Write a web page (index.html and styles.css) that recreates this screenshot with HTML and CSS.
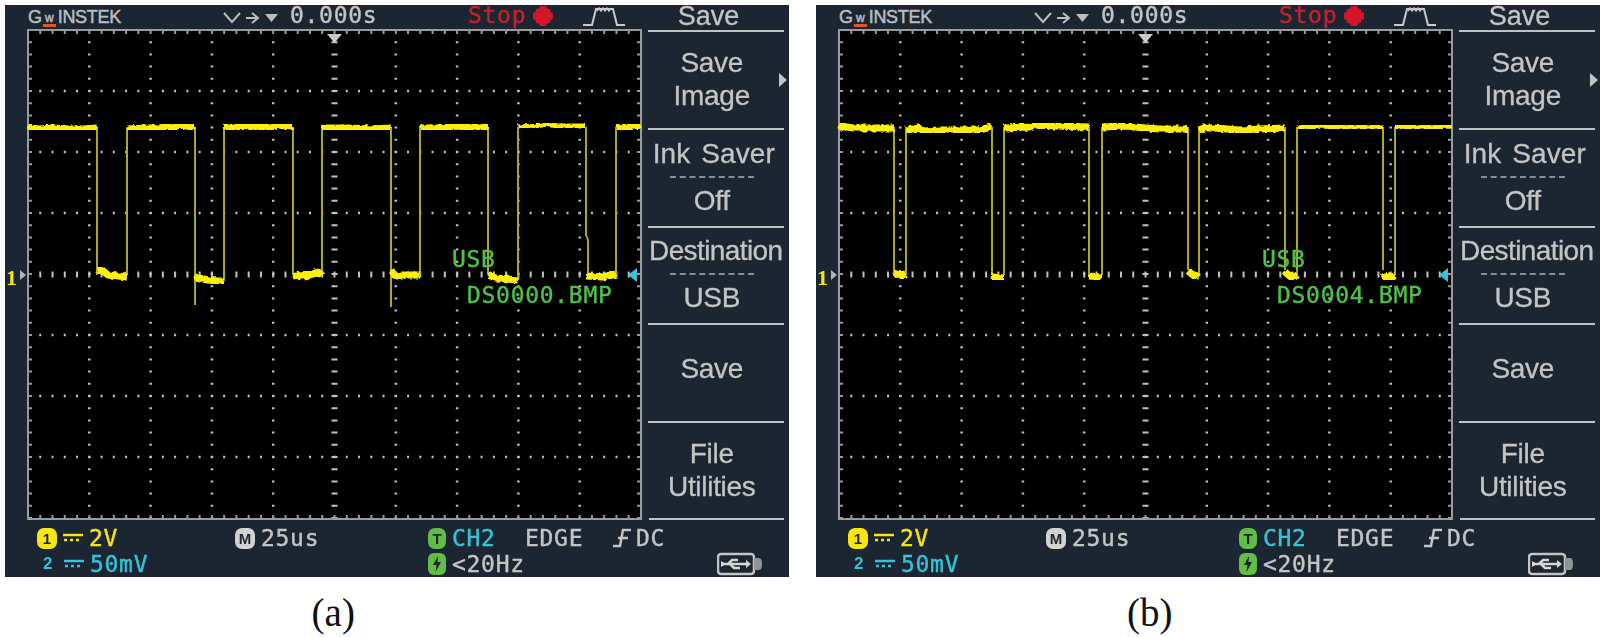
FILE: index.html
```html
<!DOCTYPE html>
<html lang="en">
<head>
  <meta charset="UTF-8" />
  <title>Oscilloscope captures</title>
  <link rel="stylesheet" href="styles.css">
</head>
<body>

  <!-- shared drawings -->
  <svg class="defs" width="0" height="0">
    <defs>
      <filter id="rough" x="-2%" y="-20%" width="104%" height="140%">
        <feTurbulence type="fractalNoise" baseFrequency="0.22" numOctaves="2" seed="4" />
        <feDisplacementMap in="SourceGraphic" scale="5" />
      </filter>
      <symbol id="grid" viewBox="0 0 613 489" overflow="visible">
        <!-- dots on the major lines -->
        <path class="dots" d="M61.3 0V489M122.6 0V489M183.9 0V489M245.2 0V489M367.8 0V489M429.1 0V489M490.4 0V489M551.7 0V489" />
        <path class="dots across" d="M0 61H613M0 122H613M0 183H613M0 305H613M0 366H613M0 427H613" />
        <!-- ticks on the centre lines -->
        <path class="ticks" d="M306.5 0V489" />
        <path class="ticks across" d="M0 244.5H613" />
        <!-- ticks on the border -->
        <path class="edge-ticks" d="M2 0V489M611 0V489" />
        <path class="edge-ticks across" d="M0 2H613M0 487H613" />
        <rect class="frame" x="0" y="0" width="613" height="489" />
        <path class="pointer" d="M299 4H314L306.500 13Z" />
      </symbol>
      <symbol id="dc" viewBox="0 0 20 10">
        <path d="M0 2H20" stroke="currentColor" stroke-width="2.500" />
        <path d="M1 7H19" stroke="currentColor" stroke-width="2.500" stroke-dasharray="3 3" />
      </symbol>
      <symbol id="timebase" viewBox="0 0 56 12">
        <path d="M1 1L9 10L17 1" fill="none" stroke="#bdbdbd" stroke-width="2" />
        <path d="M23 6H34M29 1L35 6L29 11" fill="none" stroke="#bdbdbd" stroke-width="2" />
        <path d="M42 2H55L48.500 10Z" fill="#bdbdbd" />
      </symbol>
      <symbol id="stop-dot" viewBox="0 0 20 20">
        <path d="M7 0H13L14 2.500L17 3L17.500 6L20 7V13L17.500 14L17 17L14 17.500L13 20H7L6 17.500L3 17L2.500 14L0 13V7L2.500 6L3 3L6 2.500Z" fill="#d3152c" />
      </symbol>
      <symbol id="wave" viewBox="0 0 42 20">
        <path d="M0 19H9L13 3H30L34 19H42" fill="none" stroke="#c9c9c9" stroke-width="2" />
        <path d="M14 5L16 2L18 5L20 2L22 5L24 2L26 5L28 2" fill="none" stroke="#c9c9c9" stroke-width="1.500" />
      </symbol>
      <symbol id="edge" viewBox="0 0 18 20">
        <path d="M0 18H7L10 2H18M5 10H15" fill="none" stroke="#c4c4c4" stroke-width="2.500" />
      </symbol>
      <symbol id="bolt" viewBox="0 0 18 22">
        <rect width="18" height="22" rx="6" fill="#62bd45" />
        <path d="M10 3L5 12H8.500L7.500 19L13 9H9.500Z" fill="#1c2532" />
      </symbol>
      <symbol id="usb" viewBox="0 0 46 24">
        <rect x="1" y="2" width="36" height="20" rx="3" fill="none" stroke="#c4c4c4" stroke-width="2.500" />
        <path d="M37 6H42Q45 6 45 12Q45 18 42 18H37Z" fill="#8f9499" />
        <path d="M6 12H30M11 12L15 8H21M13 12L17 16H23" fill="none" stroke="#d6d6d6" stroke-width="2.500" />
        <path d="M4 9L9 12L4 15ZM29 8L34 12L29 16Z" fill="#d6d6d6" />
      </symbol>
    </defs>
  </svg>

  <div class="figures">

    <figure class="figure">
      <div class="scope">
        <header class="top-bar">
          <div class="logo">G<span class="logo-w">w</span>INSTEK</div>
          <svg class="timebase"><use href="#timebase" /></svg>
          <div class="mono time">0.000s</div>
          <div class="mono stop">Stop</div>
          <svg class="stop-dot"><use href="#stop-dot" /></svg>
          <svg class="wave"><use href="#wave" /></svg>
        </header>
        <div class="menu-title">Save</div>

        <svg class="screen" viewBox="0 0 613 489">
          <rect class="screen-bg" width="613" height="489" />
          <use href="#grid" width="613" height="489" />
          <path class="trace-thin" d="M69 97V245M99 97V245M167 97V275M196 97V251M265 97V245M294 97V245M363 97V277M392 97V245M460 97V245M490 97V250M558 97V205L560 210V245M588 97V245" />
          <path class="trace-thick" d="M0 98L12 99L25 98L40 99L55 99L69 98M99 99L120 98L133 98L137 96L145 97L155 95L162 97L167 96M196 97L210 97L215 95L225 97L245 97L250 95L265 97M294 98L320 98L345 99L363 98M392 98L410 98L430 96L445 97L460 97M588 98L600 97L613 95" />
          <path class="trace-mid" d="M490 97L510 96L517 94L530 96L545 96L558 96" />
          <path class="trace-thick" d="M69 240L75 241L80 245L90 246L99 247M167 247L180 250L190 251L196 251M265 245L275 246L285 244L290 242L294 245M363 240L366 245L392 245M460 245L468 248L490 250M558 246L575 247L588 244" />
          <path class="marker-cyan" d="M609 238V252L600 245Z" />
          <path class="marker-gray" d="M-8 240L-2 245L-8 250Z" />
          <text class="mono-svg green" x="424" y="237">USB</text>
          <text class="mono-svg green" x="439" y="273">DS0000.BMP</text>
          <text class="one" x="-22" y="255">1</text>
        </svg>

        <nav class="menu">
          <div class="menu-item">
            <span>Save</span><span>Image</span>
            <i class="more"></i>
          </div>
          <div class="menu-item">
            <span class="ink">Ink Saver</span><hr class="dash"><span>Off</span>
          </div>
          <div class="menu-item">
            <span class="long">Destination</span><hr class="dash"><span>USB</span>
          </div>
          <div class="menu-item menu-single">
            <span>Save</span>
          </div>
          <div class="menu-item">
            <span>File</span><span>Utilities</span>
          </div>
        </nav>

        <footer class="status">
          <div class="cell yellow"><b class="badge badge-yellow">1</b><svg class="dc"><use href="#dc" /></svg><span class="mono">2V</span></div>
          <div class="cell"><b class="badge badge-white">M</b><span class="mono">25us</span></div>
          <div class="cell trigger">
            <b class="badge badge-green">T</b><span class="mono cyan ch">CH2</span>
            <span class="mono edge-name">EDGE</span>
            <svg class="edge"><use href="#edge" /></svg><span class="mono">DC</span>
          </div>
          <div></div>
          <div class="cell cyan"><b class="ch-two">2</b><svg class="dc"><use href="#dc" /></svg><span class="mono">50mV</span></div>
          <div></div>
          <div class="cell"><svg class="bolt"><use href="#bolt" /></svg><span class="mono">&lt;20Hz</span></div>
          <svg class="usb"><use href="#usb" /></svg>
        </footer>
      </div>
      <figcaption class="caption">(a)</figcaption>
    </figure>

    <figure class="figure">
      <div class="scope">
        <header class="top-bar">
          <div class="logo">G<span class="logo-w">w</span>INSTEK</div>
          <svg class="timebase"><use href="#timebase" /></svg>
          <div class="mono time">0.000s</div>
          <div class="mono stop">Stop</div>
          <svg class="stop-dot"><use href="#stop-dot" /></svg>
          <svg class="wave"><use href="#wave" /></svg>
        </header>
        <div class="menu-title">Save</div>

        <svg class="screen" viewBox="0 0 613 489">
          <rect class="screen-bg" width="613" height="489" />
          <use href="#grid" width="613" height="489" />
          <path class="trace-thin" d="M55 97V245M67 97V245M153 97V245M165 97V245M250 97V245M263 97V245M349 97V240M360 97V245M446 97V240M458 97V245M544 97V240M556 97V245" />
          <path class="trace-thick" d="M0 96L15 98L40 98L55 98M67 100L80 98L85 101L100 100L120 100L140 100L153 97M165 98L190 97L195 95L215 96L250 97M263 97L290 96L295 97L320 99L349 99M360 100L365 98L375 98L400 100L420 99L446 98" />
          <path class="trace-mid" d="M458 98L480 96L500 97L544 97M556 97L590 97L613 96" />
          <path class="trace-thick" d="M55 243L60 245L67 244M153 247L165 248M250 246L263 247M349 241L354 245L360 246M446 242L452 247L458 244M544 243L547 248L556 246" />
          <path class="marker-cyan" d="M609 238V252L600 245Z" />
          <path class="marker-gray" d="M-8 240L-2 245L-8 250Z" />
          <text class="mono-svg green" x="423" y="237">USB</text>
          <text class="mono-svg green" x="438" y="273">DS0004.BMP</text>
          <text class="one" x="-22" y="255">1</text>
        </svg>

        <nav class="menu">
          <div class="menu-item">
            <span>Save</span><span>Image</span>
            <i class="more"></i>
          </div>
          <div class="menu-item">
            <span class="ink">Ink Saver</span><hr class="dash"><span>Off</span>
          </div>
          <div class="menu-item">
            <span class="long">Destination</span><hr class="dash"><span>USB</span>
          </div>
          <div class="menu-item menu-single">
            <span>Save</span>
          </div>
          <div class="menu-item">
            <span>File</span><span>Utilities</span>
          </div>
        </nav>

        <footer class="status">
          <div class="cell yellow"><b class="badge badge-yellow">1</b><svg class="dc"><use href="#dc" /></svg><span class="mono">2V</span></div>
          <div class="cell"><b class="badge badge-white">M</b><span class="mono">25us</span></div>
          <div class="cell trigger">
            <b class="badge badge-green">T</b><span class="mono cyan ch">CH2</span>
            <span class="mono edge-name">EDGE</span>
            <svg class="edge"><use href="#edge" /></svg><span class="mono">DC</span>
          </div>
          <div></div>
          <div class="cell cyan"><b class="ch-two">2</b><svg class="dc"><use href="#dc" /></svg><span class="mono">50mV</span></div>
          <div></div>
          <div class="cell"><svg class="bolt"><use href="#bolt" /></svg><span class="mono">&lt;20Hz</span></div>
          <svg class="usb"><use href="#usb" /></svg>
        </footer>
      </div>
      <figcaption class="caption caption-b">(b)</figcaption>
    </figure>

  </div>

</body>
</html>
```

FILE: styles.css
```css
body {
  margin: 0;
  background: #fff;
  font-family: "Liberation Sans", Arial, sans-serif;
}
.defs {
  position: absolute;
}
.figures {
  display: flex;
  gap: 27.5px;
  padding: 5px 0 0 5px;
}
.figure {
  margin: 0;
  width: 783.5px;
}
.caption {
  padding: 13px 127px 0 0;
  text-align: center;
  color: #111;
  font-family: "Liberation Serif", "Times New Roman", serif;
  font-size: 39px;
  line-height: 46px;
}
.caption-b {
  padding-right: 116px;
}

/* the scope picture */
.scope {
  display: grid;
  grid-template-columns: 635.5px 148px;
  grid-template-rows: 25px 489px 58px;
  height: 572px;
  background: #1c2532;
  color: #c4c4c4;
  filter: blur(0.55px);
}
.mono, .mono-svg {
  font-family: "DejaVu Sans Mono", monospace;
  font-size: 23px;
  letter-spacing: 0.7px;
  line-height: 26px;
  -webkit-text-stroke: 0.4px currentColor;
}
.mono-svg {
  fill: #4fc04a;
  stroke: #4fc04a;
  stroke-width: 0.4px;
}

/* top bar */
.top-bar {
  display: flex;
  align-items: center;
  padding-left: 23px;
}
.logo {
  width: 195px;
  font-size: 18px;
  letter-spacing: -0.3px;
  color: #b9bcc0;
  -webkit-text-stroke: 0.5px #b9bcc0;
}
.logo-w {
  display: inline-block;
  width: 13px;
  margin: 0 2px 0 1px;
  border-bottom: 3px solid #e2562a;
  font-size: 12px;
  line-height: 11px;
  text-align: center;
  vertical-align: 1px;
}
.timebase {
  width: 56px;
  height: 12px;
  margin-right: 11px;
}
.time {
  width: 178px;
  margin-top: -5px;
}
.stop {
  width: 65px;
  margin-top: -5px;
  color: #c8202c;
}
.stop-dot {
  width: 20px;
  height: 20px;
  margin-top: -4px;
  margin-right: 30px;
}
.wave {
  width: 42px;
  height: 20px;
  margin-top: -3px;
}
.menu-title {
  padding-right: 12px;
  font-size: 27px;
  line-height: 22px;
  text-align: center;
  -webkit-text-stroke: 0.3px currentColor;
}

/* screen with graticule */
.screen {
  display: block;
  width: 613px;
  height: 489px;
  margin-left: 22.5px;
  overflow: visible;
}
.screen-bg {
  fill: #000;
}
.dots, .ticks, .edge-ticks {
  fill: none;
  stroke: #c2c2c2;
  stroke-dasharray: 2 10.2;
  stroke-dashoffset: 1;
}
.dots {
  stroke-width: 2.5;
}
.ticks {
  stroke-width: 6;
}
.edge-ticks {
  stroke-width: 4;
  stroke: #9a9a9a;
}
.across {
  stroke-dasharray: 2 10.26;
}
.frame {
  fill: none;
  stroke: #9b9b9b;
  stroke-width: 2;
}
.pointer {
  fill: #c9c9c9;
}
.trace-thin, .trace-thick, .trace-mid {
  fill: none;
  stroke-linejoin: round;
}
.trace-thin {
  stroke: #aaa62e;
  stroke-width: 2;
}
.trace-thick {
  stroke: #fcee0a;
  stroke-width: 7;
  filter: url(#rough);
}
.trace-mid {
  stroke: #fcee0a;
  stroke-width: 5;
  filter: url(#rough);
}
.marker-cyan {
  fill: #35c4d6;
}
.marker-gray {
  fill: #b5b5b5;
}
.one {
  fill: #f4e60e;
  font-family: "Liberation Serif", serif;
  font-size: 22px;
  font-weight: bold;
}

/* softkey menu */
.menu {
  display: flex;
  flex-direction: column;
  padding: 0 5px 0 7.5px;
}
.menu-item {
  position: relative;
  display: flex;
  flex-direction: column;
  align-items: center;
  justify-content: center;
  box-sizing: border-box;
  height: 97.8px;
  padding: 0 8px 2px 0;
  border-top: 2px solid #c2c2c2;
  font-size: 28px;
  letter-spacing: -0.3px;
  line-height: 33px;
  white-space: nowrap;
  -webkit-text-stroke: 0.3px currentColor;
}
.menu-single {
  padding-bottom: 10px;
}
.ink {
  margin-left: 4px;
  letter-spacing: 0.1px;
  word-spacing: 3px;
}
.long {
  margin-left: 8px;
  letter-spacing: -0.6px;
}
.dash {
  width: 84px;
  height: 0;
  margin: 6px 0;
  border: 0;
  border-top: 2px dashed #8a8d91;
}
.more {
  position: absolute;
  top: 41px;
  right: -3px;
  border-left: 8px solid #c4c4c4;
  border-top: 7px solid transparent;
  border-bottom: 7px solid transparent;
}

/* bottom status lines */
.status {
  grid-column: 1 / -1;
  display: grid;
  grid-template-columns: 198px 193px 289px 46px;
  grid-template-rows: 26px 26px;
  padding: 5px 0 0 32px;
  border-top: 2px solid #c2c2c2;
  margin-top: -1px;
  border-image: linear-gradient(90deg, transparent 643px, #c2c2c2 643px, #c2c2c2 778px, transparent 778px) 1;
}
.cell {
  display: flex;
  align-items: center;
  white-space: nowrap;
}
.yellow {
  color: #f4e60e;
}
.cyan {
  color: #35c4d6;
}
.badge {
  display: block;
  flex: none;
  width: 20px;
  height: 21px;
  margin-right: 6px;
  border-radius: 7px;
  color: #1c2532;
  font-size: 15px;
  line-height: 21px;
  text-align: center;
}
.badge-yellow {
  background: #f4e60e;
}
.badge-white {
  background: #d2d2d2;
}
.badge-green {
  width: 18px;
  background: #62bd45;
}
.ch-two {
  width: 27px;
  padding-left: 6px;
  box-sizing: border-box;
  font-size: 17px;
}
.dc {
  width: 20px;
  height: 10px;
  margin-right: 6px;
}
.ch {
  width: 73px;
}
.edge-name {
  width: 88px;
}
.edge {
  width: 18px;
  height: 20px;
  margin-right: 5px;
}
.bolt {
  width: 18px;
  height: 22px;
  margin-right: 6px;
}
.usb {
  width: 46px;
  height: 24px;
  margin-top: 1px;
}
```
